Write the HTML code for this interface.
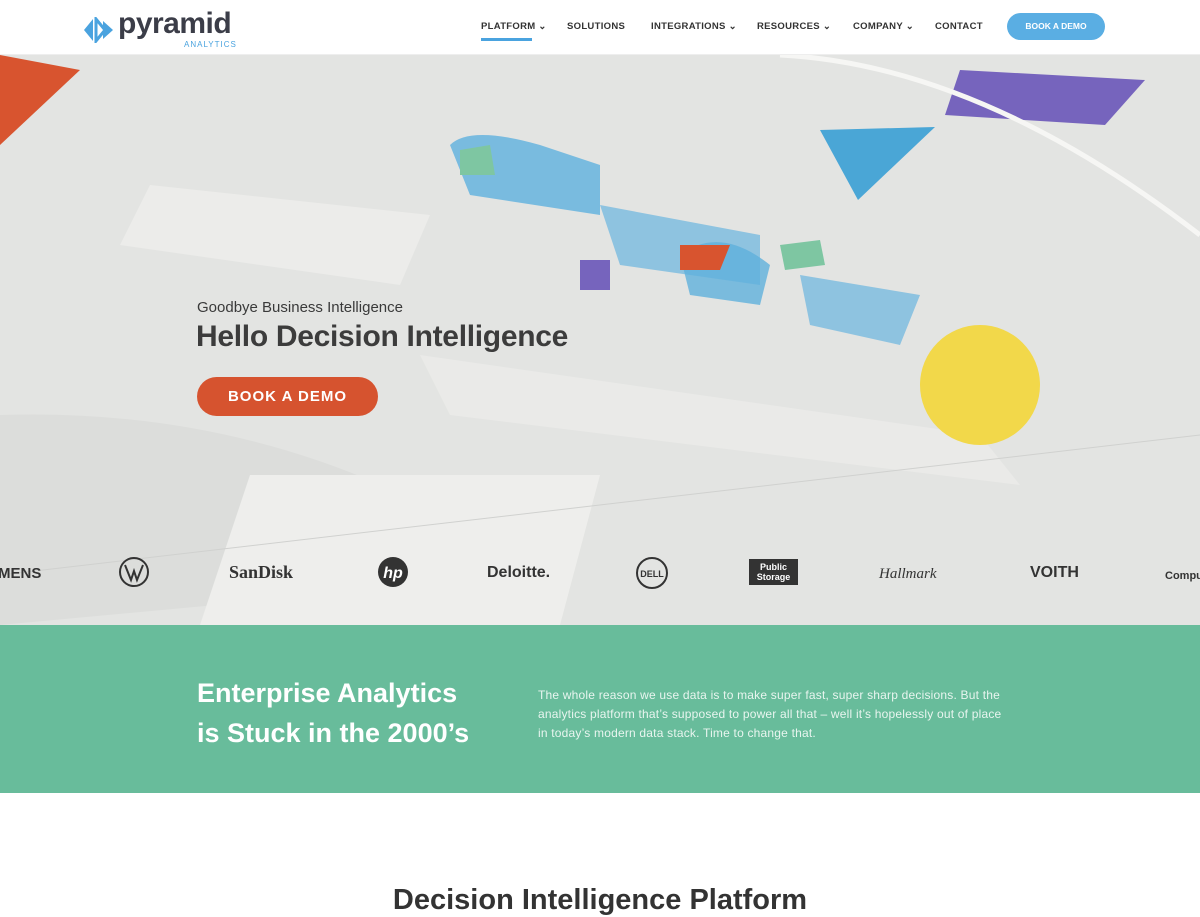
<!DOCTYPE html>
<html><head><meta charset="utf-8"><style>
*{margin:0;padding:0;box-sizing:border-box}
body{width:1200px;height:900px;overflow:hidden;background:#fff;font-family:"Liberation Sans",sans-serif;position:relative}
.nav{position:absolute;top:0;left:0;width:1200px;height:55px;background:#fff;border-bottom:1px solid #eee;z-index:5}
.nav a{position:absolute;top:21px;font-size:9.5px;font-weight:bold;color:#333;letter-spacing:.3px}
.hero{position:absolute;top:55px;left:0;width:1200px;height:570px;background:#e3e4e2;overflow:hidden}
.green{position:absolute;top:625px;left:0;width:1200px;height:168px;background:#68bc9b}
.logo{position:absolute;top:558px;font-weight:bold;color:#333}
</style></head><body>
<div class="nav">
<svg style="position:absolute;left:83px;top:17px" width="32" height="26" viewBox="0 0 32 26"><path d="M10 2 L1 13 L10 24 Z" fill="#4aa3df"/><path d="M13 2 L13 24 L22 13Z" fill="none" stroke="#4aa3df" stroke-width="3"/><path d="M20 4 L30 13 L20 22Z" fill="#4aa3df"/></svg>
<div style="position:absolute;left:118px;top:7px;font-size:30px;font-weight:bold;color:#3b3d48;letter-spacing:-.5px">pyramid</div>
<div style="position:absolute;left:184px;top:40px;font-size:8px;color:#4aa3df;letter-spacing:1px">ANALYTICS</div>
<a style="left:481px">PLATFORM ⌄</a><div style="position:absolute;left:481px;top:38px;width:51px;height:3px;background:#4aa3df"></div>
<a style="left:567px">SOLUTIONS</a>
<a style="left:651px">INTEGRATIONS ⌄</a>
<a style="left:757px">RESOURCES ⌄</a>
<a style="left:853px">COMPANY ⌄</a>
<a style="left:935px">CONTACT</a>
<div style="position:absolute;left:1007px;top:13px;width:98px;height:27px;border-radius:14px;background:#5aaee3;color:#fff;font-size:8.5px;font-weight:bold;text-align:center;line-height:27px">BOOK A DEMO</div>
</div>
<div class="hero">
<svg width="1200" height="570" style="position:absolute;left:0;top:0">
<path d="M0 0 L80 15 L0 90Z" fill="#d8542f"/>
<path d="M960 15 L1145 25 L1105 70 L945 60Z" fill="#7664bd"/>
<path d="M820 75 L935 72 L858 145Z" fill="#4aa6d6"/>
<path d="M0 360 Q300 350 540 520 L0 570Z" fill="#dcdddb"/>
<path d="M250 420 L600 420 L560 570 L200 570Z" fill="#eeeeec"/>
<path d="M150 130 L430 160 L400 230 L120 190Z" fill="#ececea"/>
<path d="M420 300 L980 380 L1020 430 L450 360Z" fill="#eaeae8"/>
<circle cx="980" cy="330" r="60" fill="#f2d84a"/>
<path d="M450 90 Q470 70 540 90 L600 110 L600 160 L470 140Z" fill="#5eb0de" opacity=".8"/>
<path d="M600 150 L760 180 L760 230 L620 210Z" fill="#6ab5e0" opacity=".7"/>
<path d="M680 200 Q720 170 770 210 L760 250 L690 240Z" fill="#5fb0dc" opacity=".8"/>
<path d="M800 220 L920 240 L900 290 L810 270Z" fill="#6ab5e0" opacity=".7"/>
<path d="M680 190 L730 190 L720 215 L680 215Z" fill="#d8542f"/>
<path d="M460 95 L490 90 L495 120 L460 120Z" fill="#7ec6a2"/>
<path d="M780 190 L820 185 L825 210 L785 215Z" fill="#7ec6a2"/>
<path d="M580 205 L610 205 L610 235 L580 235Z" fill="#7664bd"/>
<path d="M780 0 Q980 10 1200 180" stroke="#f6f6f4" stroke-width="5" fill="none"/>
<path d="M0 520 L1200 380" stroke="#d0d1cf" stroke-width="1"/>
</svg>
<div style="position:absolute;left:197px;top:244px;font-size:15px;color:#3a3a3a">Goodbye Business Intelligence</div>
<div style="position:absolute;left:196px;top:265px;font-size:30px;font-weight:bold;color:#3c3c3c;letter-spacing:-.3px">Hello Decision Intelligence</div>
<div style="position:absolute;left:197px;top:322px;width:181px;height:39px;border-radius:20px;background:#d6532f;color:#fff;font-size:15px;font-weight:bold;letter-spacing:1px;text-align:center;line-height:39px">BOOK A DEMO</div>
</div>
<div class="logo" style="left:-2px;font-size:15px;top:565px">MENS</div>
<svg class="logo" style="left:118px;top:556px" width="32" height="32"><circle cx="16" cy="16" r="14" fill="none" stroke="#333" stroke-width="2"/><path d="M7 9 L13 24 L16 15 L19 24 L25 9" fill="none" stroke="#333" stroke-width="2"/></svg>
<div class="logo" style="left:229px;top:562px;font-size:18px;font-family:'Liberation Serif',serif">SanDisk</div>
<svg class="logo" style="left:377px;top:556px" width="32" height="32"><circle cx="16" cy="16" r="15" fill="#333"/><text x="16" y="22" fill="#fff" font-size="16" font-style="italic" text-anchor="middle" font-family="Liberation Sans">hp</text></svg>
<div class="logo" style="left:487px;top:564px;font-size:16px">Deloitte.</div>
<svg class="logo" style="left:635px;top:556px" width="34" height="34"><circle cx="17" cy="17" r="15" fill="none" stroke="#333" stroke-width="2"/><text x="17" y="21" font-size="9" font-weight="bold" text-anchor="middle" fill="#333" font-family="Liberation Sans">DELL</text></svg>
<div class="logo" style="left:749px;top:559px;width:49px;height:26px;background:#333;color:#fff;font-size:9px;text-align:center;line-height:10px;padding-top:3px">Public<br>Storage</div>
<div class="logo" style="left:879px;top:566px;font-size:15px;font-style:italic;font-family:'Liberation Serif',serif;font-weight:normal">Hallmark</div>
<div class="logo" style="left:1030px;top:564px;font-size:16px">VOITH</div>
<div class="logo" style="left:1165px;top:570px;font-size:11px">Computa</div>
<div class="green">
<div style="position:absolute;left:197px;top:48px;font-size:27px;font-weight:bold;color:#fff;line-height:40px">Enterprise Analytics<br>is Stuck in the 2000’s</div>
<div style="position:absolute;left:538px;top:61px;width:470px;font-size:12px;color:#e8f5ef;line-height:19px;letter-spacing:.2px">The whole reason we use data is to make super fast, super sharp decisions. But the analytics platform that’s supposed to power all that – well it’s hopelessly out of place in today’s modern data stack. Time to change that.</div>
</div>
<div style="position:absolute;left:0;width:1200px;top:884px;text-align:center;font-size:29px;font-weight:bold;color:#333">Decision Intelligence Platform</div>
</body></html>
